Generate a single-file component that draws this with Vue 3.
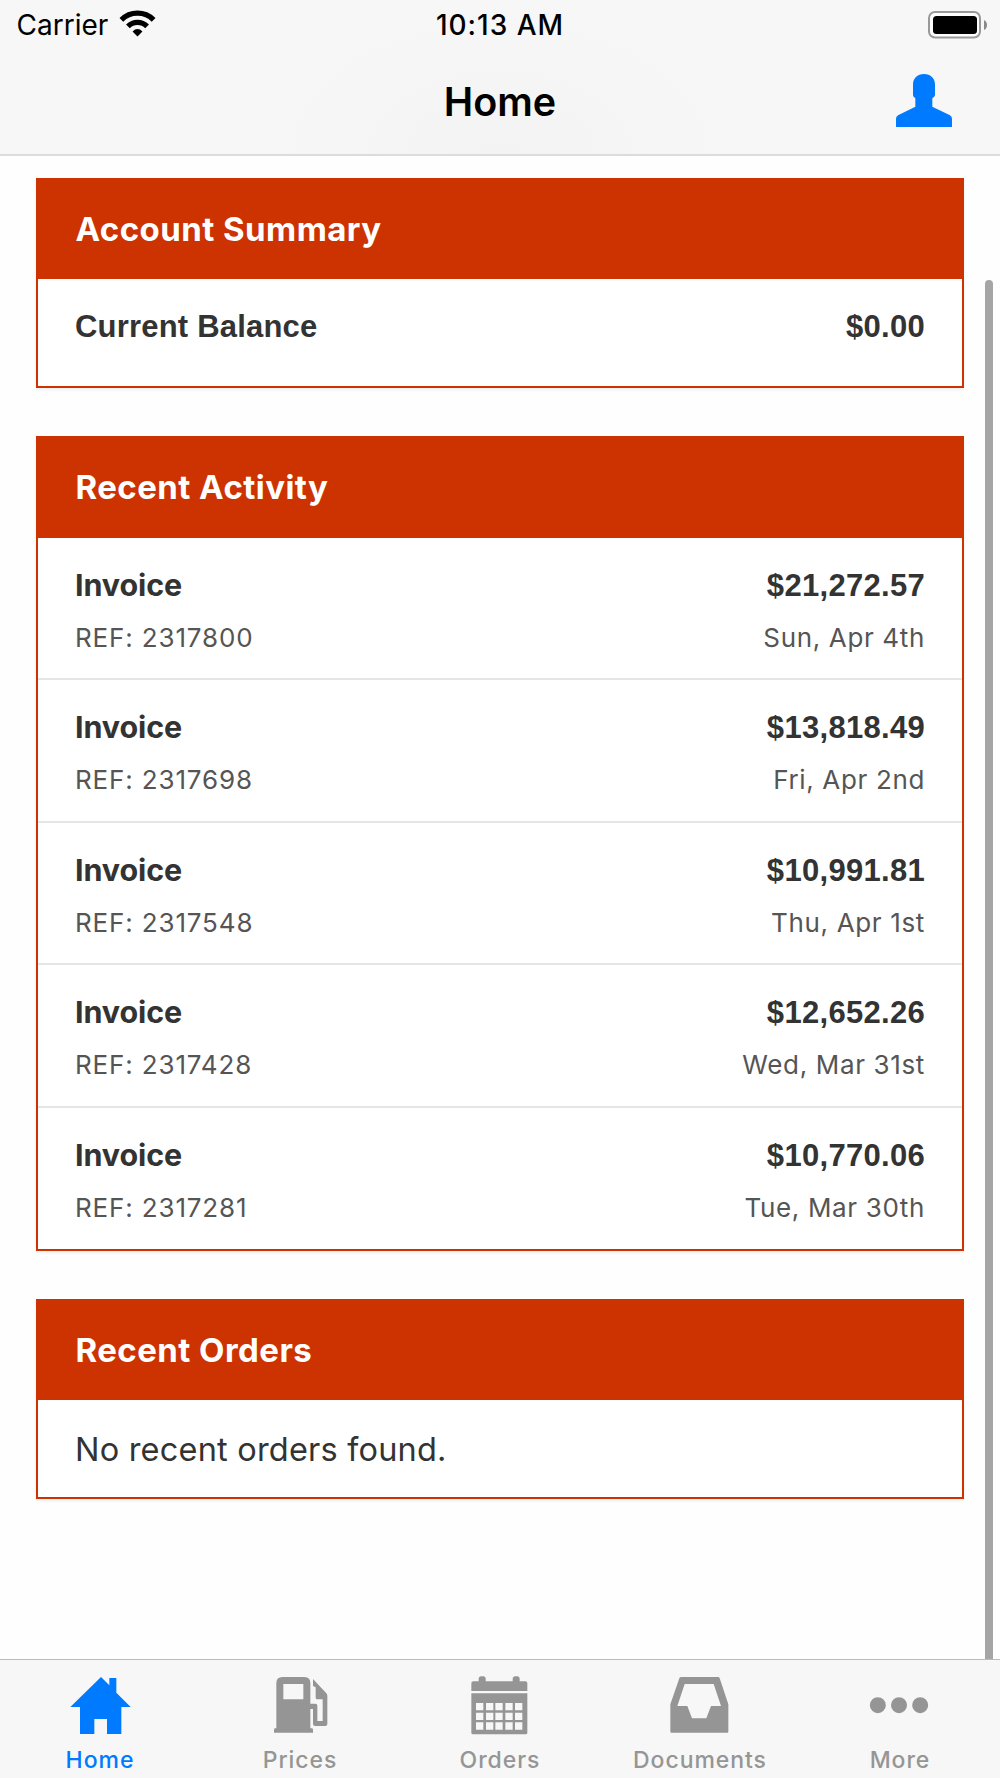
<template>
  <div class="app">
    <header class="header">
      <div class="status-bar">
        <div class="carrier">
          <span>Carrier</span>
          <svg class="wifi" viewBox="360 30 112 81" fill="none" stroke="#000" stroke-width="16">
            <path d="M367.2 59.2a69 69 0 0 1 97.6 0" />
            <path d="M387 79a41 41 0 0 1 58 0" />
            <path d="M401 95q15-15 30 0l-15 15z" fill="#000" stroke="none" />
          </svg>
        </div>
        <span class="time">10:13 AM</span>
        <div class="battery-wrap">
          <svg class="battery" viewBox="0 0 60 28">
            <rect x="1" y="1" width="51" height="25.5" rx="6" fill="#fdfdfd" stroke="#999" stroke-width="2" />
            <rect x="5" y="5" width="44" height="18" rx="3.5" fill="#000" />
            <path d="M56 9q3 1.500 3 5t-3 5z" fill="#888" />
          </svg>
        </div>
      </div>
      <div class="nav-bar">
        <h1>Home</h1>
        <svg class="user" viewBox="1188 222 168 160" fill="#007aff">
          <path d="M1272 222c20 0 33 13 33 31v33q-1 5-8 9v25l53 26q6 4 6 10v23q0 3-3 3h-162q-3 0-3-3v-23q0-6 6-10l52-26v-25q-7-4-7-9v-33c0-18 13-31 33-31z" />
        </svg>
      </div>
    </header>

    <main class="content">
      <section class="card">
        <h2>Account Summary</h2>
        <div class="balance">
          <span>Current Balance</span>
          <span class="amount">$0.00</span>
        </div>
      </section>

      <section class="card">
        <h2>Recent Activity</h2>
        <div v-for="item in activity" :key="item.refNo" class="row">
          <div class="line">
            <span class="kind">Invoice</span>
            <span class="amount">{{ item.amount }}</span>
          </div>
          <div class="line detail">
            <span>REF: {{ item.refNo }}</span>
            <span class="date">{{ item.date }}</span>
          </div>
        </div>
      </section>

      <section class="card">
        <h2>Recent Orders</h2>
        <p class="empty">No recent orders found.</p>
      </section>
      <div class="scrollbar"></div>
    </main>

    <nav class="tabs">
      <a v-for="tab in tabs" :key="tab.label" class="tab" :class="{ active: tab.label === current }" @click="current = tab.label">
        <svg :viewBox="tab.viewBox" fill="currentColor" fill-rule="evenodd">
          <path :d="tab.path" />
        </svg>
        <span>{{ tab.label }}</span>
      </a>
    </nav>
  </div>
</template>

<script setup>
import { ref } from 'vue'

const current = ref('Home')

const activity = [
  { refNo: '2317800', amount: '$21,272.57', date: 'Sun, Apr 4th' },
  { refNo: '2317698', amount: '$13,818.49', date: 'Fri, Apr 2nd' },
  { refNo: '2317548', amount: '$10,991.81', date: 'Thu, Apr 1st' },
  { refNo: '2317428', amount: '$12,652.26', date: 'Wed, Mar 31st' },
  { refNo: '2317281', amount: '$10,770.06', date: 'Tue, Mar 30th' }
]

// calendar day cells, cut out of the body by the even-odd rule
const cells = [189, 218, 247]
  .flatMap((y) => [167, 197, 225, 255, 284].map((x) => `M${x} ${y}h22v22h-22z`))
  .join('')

const dot = (x) => `M${x - 24} 195.500a24 24 0 1 0 48 0a24 24 0 1 0-48 0z`

const tabs = [
  {
    label: 'Home',
    viewBox: '200 105 200 180',
    path: 'M302 111l25 25v-22h21v44l43 43h-28v81h-43v-45h-38v45h-43v-81h-29z'
  },
  {
    label: 'Prices',
    viewBox: '800 105 200 180',
    path: 'M846 111h66q18 0 18 18v62h15q6 0 6 6v46h16v-65h-16q-5 0-5-5v-31l-8-4v-21l40 43q3 3 3 8v84q0 6-6 6h-31q-6 0-6-6v-45h-8v58h4q4 0 4 4v9h-117v-9q0-4 4-4h3v-136q0-18 18-18zM849 132v46h60v-46z'
  },
  {
    label: 'Orders',
    viewBox: '140 105 200 180',
    path: `M159 124h16v-7q0-8 8-8h5q8 0 8 8v7h81v-7q0-8 8-8h5q8 0 8 8v7h17q6 0 6 6v23h-168v-23q0-6 6-6zM153 160h168v118q0 5-5 5h-158q-5 0-5-5z${cells}`
  },
  {
    label: 'Documents',
    viewBox: '740 105 200 180',
    path: 'M783 111h110q4 0 5 4l26 78v82q0 3-3 3h-168q-3 0-3-3v-82l27-78q1-4 6-4zM793 132l-22 66h30l14 37h43l14-37h30l-22-66z'
  },
  {
    label: 'More',
    viewBox: '501 105 200 180',
    path: dot(533.5) + dot(597) + dot(660.5)
  }
]
</script>

<style>
body {
  margin: 0;
  background: #fefefe;
}
</style>

<style scoped>
.app {
  height: 1778px;
  display: flex;
  flex-direction: column;
  overflow: hidden;
  box-sizing: border-box;
  background: #fefefe;
  color: #333;
  font-family: Inter, "Liberation Sans", sans-serif;
}

.header {
  height: 156px;
  box-sizing: border-box;
  border-bottom: 2px solid #dcdcdc;
  background: radial-gradient(ellipse 240px 150px at 50% 100%, #f3f3f3, #f7f7f7);
  color: #000;
}

.status-bar {
  height: 51px;
  display: grid;
  grid-template-columns: 1fr auto 1fr;
  align-items: center;
  padding: 0 12px;
  font-size: 28px;
  line-height: 51px;
}

.carrier {
  display: flex;
  align-items: center;
  gap: 11px;
  padding-left: 4.500px;
}

.wifi {
  width: 37px;
  height: 27px;
  margin-top: -4px;
}

.time {
  font-weight: 500;
  letter-spacing: 1px;
}

.battery-wrap {
  display: flex;
  justify-content: flex-end;
}

.battery {
  width: 60px;
  height: 28px;
  margin-top: -2px;
}

.nav-bar {
  height: 103px;
  display: grid;
  grid-template-columns: 1fr auto 1fr;
  align-items: center;
  padding: 0 48px;
}

.nav-bar h1 {
  grid-column: 2;
  margin: 0 0 2px;
  font-size: 39.500px;
  font-weight: 600;
  line-height: 100px;
}

.user {
  justify-self: end;
  width: 56px;
  height: 53.3px;
  margin-bottom: 4px;
}

.content {
  position: relative;
  flex: 1;
  display: flex;
  flex-direction: column;
  gap: 48.300px;
  padding: 22px 36px 0;
}

.card {
  border: 2px solid #cc3300;
  border-top: 0;
  background: #fff;
  box-shadow: 0 2px 3px rgba(0, 0, 0, 0.06);
}

.card h2 {
  height: 101.300px;
  margin: 0;
  padding-left: 37.500px;
  background: #cc3300;
  color: #fff;
  font-size: 33px;
  font-weight: 700;
  line-height: 102px;
  letter-spacing: 0.45px;
}

.balance {
  height: 106.700px;
  box-sizing: border-box;
  display: flex;
  justify-content: space-between;
  padding: 28px 37px 0;
  font-family: "Liberation Sans", sans-serif;
  font-size: 31px;
  font-weight: 700;
  line-height: 40px;
  letter-spacing: 0.2px;
}

.row {
  height: 142.600px;
  box-sizing: border-box;
  padding: 28px 37px 0;
  border-bottom: 2px solid #e5e5e5;
}

.row:last-child {
  height: 140.600px;
  border-bottom: 0;
}

.line {
  display: flex;
  justify-content: space-between;
  font-size: 30.500px;
  font-weight: 700;
  line-height: 40px;
}

.kind {
  margin-top: -1px;
  letter-spacing: -0.1px;
}

.amount {
  font-family: "Liberation Sans", sans-serif;
  font-size: 31px;
  letter-spacing: 0.3px;
}

.detail {
  margin-top: 12px;
  color: #555;
  font-size: 26px;
  font-weight: 400;
  letter-spacing: 0.85px;
}

.date {
  letter-spacing: 0.65px;
}

.empty {
  height: 96.700px;
  margin: 0;
  padding-left: 37px;
  font-size: 32.500px;
  line-height: 99px;
  letter-spacing: 0.2px;
}

.scrollbar {
  position: absolute;
  top: 124px;
  right: 7px;
  bottom: 0;
  width: 8px;
  border-radius: 4px 4px 0 0;
  background: #a5a5a5;
}

.tabs {
  height: 119px;
  box-sizing: border-box;
  display: grid;
  grid-template-columns: repeat(5, 1fr);
  border-top: 1px solid #bcbcbc;
  background: #f7f7f7;
}

.tab {
  display: flex;
  flex-direction: column;
  align-items: center;
  padding-top: 15px;
  color: #959595;
  font-size: 23px;
  font-weight: 500;
  line-height: 30px;
  letter-spacing: 0.95px;
}

.tab.active {
  color: #007aff;
}

.tab svg {
  width: 66.700px;
  height: 60px;
  margin-bottom: 10px;
}
</style>
